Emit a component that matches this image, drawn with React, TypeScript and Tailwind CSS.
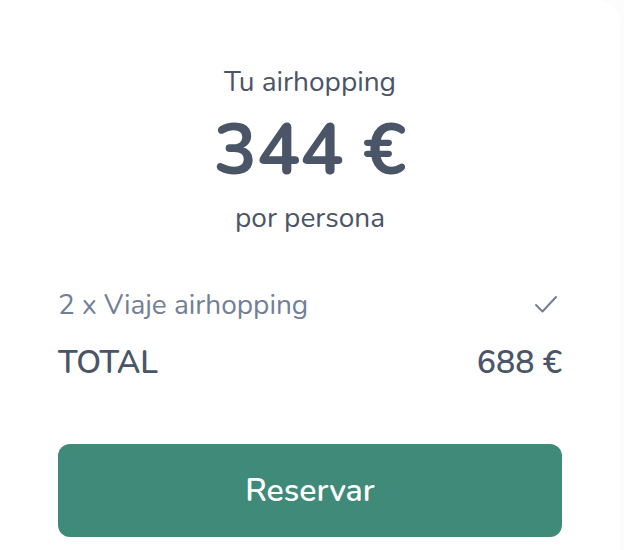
import React from 'react';

const font = { fontFamily: "Nunito, 'Open Sans', 'Noto Sans', sans-serif" };

function CheckIcon() {
  return (
    <svg className="mr-[4px]" width="24" height="20" viewBox="0 0 24 20" fill="none" stroke="#718096" strokeWidth="2" strokeLinecap="round" strokeLinejoin="round">
      <path d="M2 10l6.5 6.5L22 2" />
    </svg>
  );
}

export default function App() {
  return (
    <div className="w-[624px] h-[550px] bg-[#fcfcfc] overflow-hidden" style={font}>
      <div className="w-[620px] h-[550px] bg-white rounded-tr-[24px] px-[58px] pt-[64px]">
        {/* Price summary */}
        <div className="flex flex-col items-center text-[#4a5568]">
          <p className="text-[28px] leading-[36px]">Tu airhopping</p>
          <p className="text-[72px] leading-[80px] font-bold mt-[10px]">344 €</p>
          <p className="text-[28px] leading-[36px] mt-[10px]">por persona</p>
        </div>

        {/* Lines */}
        <div className="mt-[51px] flex items-center justify-between">
          <span className="text-[28px] leading-[36px] text-[#718096]">2 x Viaje airhopping</span>
          <CheckIcon />
        </div>
        <div className="mt-[22px] flex items-center justify-between text-[#4a5568]">
          <span className="text-[32px] leading-[36px] font-semibold">TOTAL</span>
          <span className="text-[32px] leading-[36px] font-semibold">688 €</span>
        </div>

        <button className="mt-[63px] w-full h-[93px] rounded-[12px] bg-[#3f8a79] text-white text-[32px] font-semibold">
          Reservar
        </button>
      </div>
    </div>
  );
}
